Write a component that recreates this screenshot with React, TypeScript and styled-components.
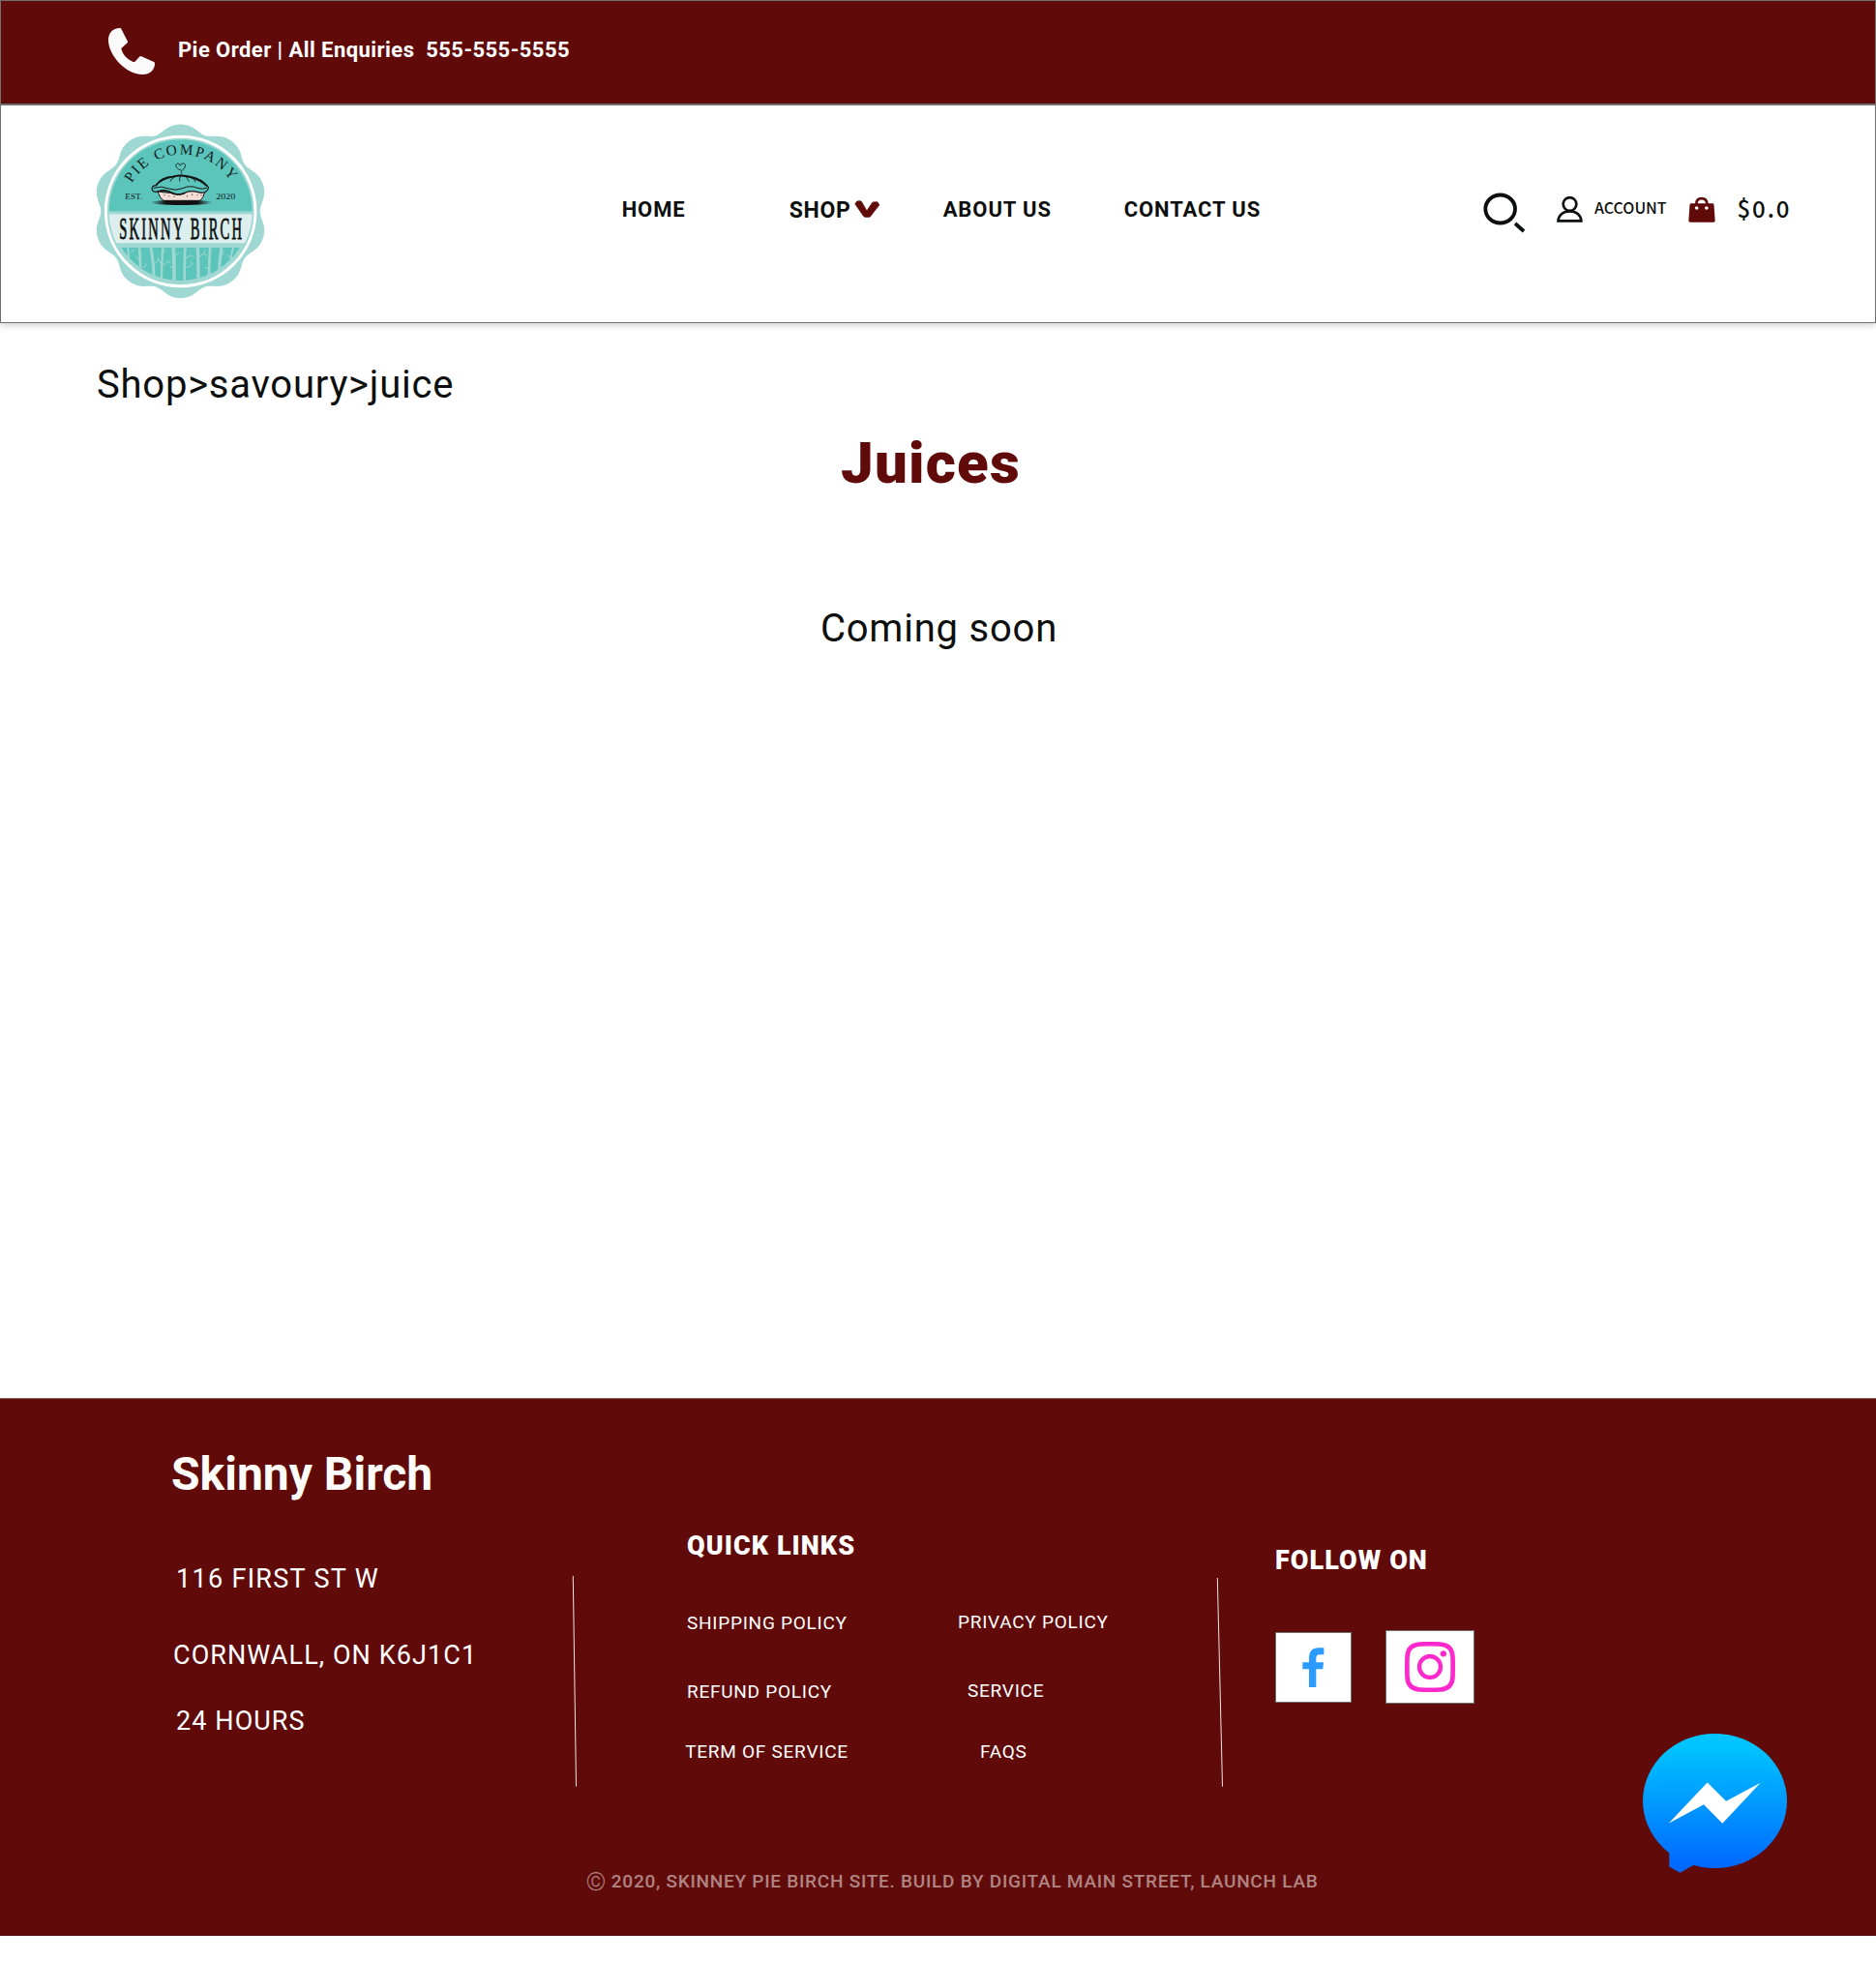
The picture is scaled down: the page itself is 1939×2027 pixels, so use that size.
import React from "react";
import styled, { createGlobalStyle } from "styled-components";

const maroon = "#600b0a";
const ink = "#0d0f0e";
const outline = "#707070";

const GlobalStyle = createGlobalStyle`
  *, *::before, *::after { box-sizing: border-box; }
  body {
    margin: 0;
    background: #fff;
    font-family: Roboto, "Noto Sans", sans-serif;
    color: ${ink};
  }
  h1, h2, h3, p, ul { margin: 0; padding: 0; }
  ul { list-style: none; }
  a { color: inherit; text-decoration: none; }
  svg { display: block; flex: none; }
`;

const Page = styled.div`
  display: flex;
  flex-direction: column;
  width: 1939px;
  min-height: 2027px;
`;

const TopBar = styled.div`
  display: flex;
  align-items: flex-start;
  gap: 24px;
  height: 108px;
  padding: 28px 0 0 111px;
  border: 1px solid ${outline};
  background: ${maroon};
`;

const TopBarText = styled.p`
  margin-top: 10px;
  font-size: 22px;
  font-weight: 700;
  line-height: 26px;
  letter-spacing: 0.44px;
  white-space: pre;
  color: #fff;
`;

const Header = styled.header`
  display: grid;
  grid-template-columns: 542.7px 173px 159px 187px 371.8px 76px 135.5px auto;
  align-items: start;
  height: 226px;
  padding: 0 0 0 99px;
  border: 1px solid ${outline};
  background: #fff;
  box-shadow: 0 3px 6px rgba(0, 0, 0, 0.16);
  z-index: 1;
`;

const LogoLink = styled.a`
  margin-top: 19px;
`;

const NavLink = styled.a<{ $drop?: number; $size?: number; $ls?: number }>`
  display: flex;
  gap: 3px;
  margin-top: ${({ $drop = 0 }) => 94.5 + $drop}px;
  font-size: ${({ $size = 22 }) => $size}px;
  font-weight: 700;
  line-height: 26px;
  letter-spacing: ${({ $ls = 0.9 }) => $ls}px;
`;

const IconSlot = styled.span<{ $top: number }>`
  display: flex;
  margin-top: ${({ $top }) => $top}px;
`;

const HeaderAction = styled.a`
  display: flex;
  gap: 12px;
  margin-top: 94px;
  font-family: "Noto Sans CJK JP", "Noto Sans", sans-serif;
  font-weight: 500;
`;

const AccountLabel = styled.span`
  margin: -1px 0 0 -0.5px;
  font-size: 16px;
  line-height: 24px;
`;

const CartTotal = styled.span`
  margin: -6px 0 0 10.5px;
  font-size: 24px;
  line-height: 36px;
  letter-spacing: 1.93px;
`;

const Main = styled.main`
  display: flex;
  flex-direction: column;
  height: 1111px;
  padding-top: 40px;
`;

const Breadcrumb = styled.nav`
  padding-left: 100px;
  font-size: 40px;
  line-height: 48px;
  letter-spacing: 0.77px;
`;

const Title = styled.h1`
  margin-top: 21.5px;
  padding-right: 15px;
  font-size: 60px;
  font-weight: 900;
  line-height: 70px;
  letter-spacing: 1.2px;
  text-align: center;
  color: ${maroon};
`;

const Notice = styled.p`
  margin-top: 112.5px;
  padding-left: 2px;
  font-size: 40px;
  line-height: 48px;
  letter-spacing: 0.78px;
  text-align: center;
`;

const Footer = styled.footer`
  position: relative;
  height: 556px;
  border-top: 1px solid #8a6262;
  background: ${maroon};
  color: #fff;
`;

const FooterColumns = styled.div`
  display: flex;
  align-items: flex-start;
  height: 487.5px;
`;

const ContactColumn = styled.section`
  width: 591px;
  padding: 50px 0 0 177px;
`;

const Brand = styled.h2`
  font-size: 48px;
  font-weight: 700;
  line-height: 56px;
  color: #fdfcf8;
`;

const AddressLine = styled.p<{ $top: number; $left: number; $ls: number }>`
  margin: ${({ $top }) => $top}px 0 0 ${({ $left }) => $left}px;
  font-size: 27px;
  line-height: 32px;
  letter-spacing: ${({ $ls }) => $ls}px;
`;

const Divider = styled.svg<{ $top: number }>`
  margin-top: ${({ $top }) => $top}px;
`;

const LinksColumn = styled.section`
  width: 660px;
  padding: 136px 0 0 113px;
`;

const FollowColumn = styled.section`
  padding: 151px 0 0 53px;
`;

const FooterHeading = styled.h3`
  font-size: 27px;
  font-weight: 900;
  line-height: 32px;
  letter-spacing: 1.07px;
`;

const LinkLists = styled.div`
  display: grid;
  grid-template-columns: 280px auto;
`;

const FooterLink = styled.li<{ $top: number; $left?: number }>`
  margin: ${({ $top }) => $top}px 0 0 ${({ $left = 0 }) => $left}px;
  font-size: 19px;
  line-height: 22px;
  letter-spacing: 0.74px;
`;

const SocialRow = styled.div`
  display: flex;
  align-items: center;
  gap: 35px;
  margin-top: 56px;
`;

const SocialTile = styled.a<{ $w: number; $h: number }>`
  display: flex;
  align-items: center;
  justify-content: center;
  width: ${({ $w }) => $w}px;
  height: ${({ $h }) => $h}px;
  border: 1px solid ${outline};
  background: #fff;
`;

const Copyright = styled.p`
  display: flex;
  gap: 5.5px;
  padding-left: 605.5px;
  font-size: 19px;
  font-weight: 500;
  line-height: 22px;
  letter-spacing: 0.745px;
  color: #b08483;
`;

const CopyrightMark = styled.span`
  font-size: 26px;
  font-weight: 300;
  letter-spacing: 0;
`;

const ChatButton = styled.a`
  position: absolute;
  top: 346px;
  right: 92px;
`;

const PhoneIcon = () => (
  <svg width="48" height="48" viewBox="0 0 48 48" fill="#fafafa">
    <path d="M12 0C12.7 0 13.1.3 13.4 1L19.8 13.6c.4.8.2 1.4-.4 2L13.3 21C14.5 27.5 20.6 33.9 27 35.2L32.3 29.6c.6-.6 1.2-.7 1.9-.3L47 35c.7.3 1 .8 1 1.5C48 43.500 42.500 48 35.500 48C17 48 0 27 0 12.500C0 5 4.500 0 12 0Z" />
  </svg>
);

const ChevronSvg = styled.svg`
  margin-top: 2.500px;
`;

const ChevronIcon = () => (
  <ChevronSvg width="27" height="20" viewBox="0 0 27 20">
    <path
      d="M2.800 1L6 0.800Q7 0.800 7.600 1.800L12.900 11L18.400 2.800Q19 1.900 20 1.900L23.800 1.800L25.800 4.800L16.800 16.400Q16.100 17.300 15.100 17.300H11.300Q10.300 17.300 9.600 16.400L0.800 3.800Z"
      fill={maroon} stroke={maroon} strokeWidth="0.8" strokeLinejoin="round"
    />
  </ChevronSvg>
);

const SearchIcon = () => (
  <svg width="44" height="42" viewBox="99 55 132 126" fill="none" stroke={ink}>
    <ellipse cx="152" cy="106" rx="46" ry="43.500" strokeWidth="11.500" />
    <path d="M198 151L225 175" strokeWidth="11.500" />
  </svg>
);

const UserIcon = () => (
  <svg width="27" height="27" viewBox="327 70 81 81" fill="none" stroke={ink} strokeWidth="8">
    <circle cx="367.500" cy="94" r="20.500" />
    <path d="M331.500 146H403C402 127 387 116 367.500 116S332.500 127 331.500 146Z" />
  </svg>
);

const BagIcon = () => (
  <svg width="28" height="28" viewBox="736 68 84 84">
    <path d="M761 92C761 80 767 74.500 777 74.500S794 80 794 92" fill="none" stroke={maroon} strokeWidth="8" />
    <path d="M744 90H811Q815 90 815.500 94L819 143Q819 148 814 148H742Q737 148 737 143L740.500 94Q741 90 744 90Z" fill={maroon} />
    <circle cx="762" cy="104" r="5.500" fill="#fff" />
    <circle cx="792.500" cy="104" r="5.500" fill="#fff" />
  </svg>
);

const FacebookIcon = () => (
  <svg width="23" height="41" viewBox="317 371 69 123">
    <path d="M338 495V438H318V417H338V405C338 383 348 372 367 372H384V393H371C363 393 360 396 360 404V417H383L381 438H360V495Z" fill="#2b9bff" />
  </svg>
);

const InstagramIcon = () => (
  <svg width="52" height="52" viewBox="636 351 156 156" fill="none" stroke="#fd29cd" strokeWidth="14">
    <path d="M683 358.500Q714 357 745 358.500Q783 361 784.500 398Q785.500 429 784.500 460Q783 497 745 499.500Q714 501 683 499.500Q645 497 643.500 460Q642.500 429 643.500 398Q645 361 683 358.500Z" />
    <circle cx="714" cy="429" r="33" strokeWidth="13" />
    <circle cx="755.500" cy="388" r="9.500" fill="#fd29cd" stroke="none" />
  </svg>
);

const MessengerIcon = () => (
  <svg width="149" height="144" viewBox="114 65.500 447 432">
    <defs>
      <linearGradient id="chatFill" gradientUnits="userSpaceOnUse" x1="0" y1="66" x2="0" y2="482">
        <stop offset="0" stopColor="#00c6ff" />
        <stop offset="0.1" stopColor="#00c3ff" />
        <stop offset="1" stopColor="#0068ff" />
      </linearGradient>
    </defs>
    <ellipse cx="337.500" cy="274" rx="223.500" ry="208.500" fill="url(#chatFill)" />
    <path d="M196 400V478L229 497L272 473L300 440Z" fill="url(#chatFill)" />
    <path d="M194 344L314 217L372 275L479 218L361 344L303 285Z" fill="#fff" />
  </svg>
);

const badgeCenter = { x: 319.5, y: 324 };

const scallopPath = (() => {
  const points: string[] = [];
  for (let deg = 0; deg < 360; deg += 2) {
    const a = (deg * Math.PI) / 180;
    const r = 259.5 + 11.5 * Math.cos(10 * a) - 1.5 * Math.cos(20 * a);
    points.push(`${(badgeCenter.x + r * Math.sin(a)).toFixed(1)} ${(badgeCenter.y - r * Math.cos(a)).toFixed(1)}`);
  }
  return `M${points.join("L")}Z`;
})();

const birchTrunks = [
  [156, 6, 6], [192, 8, 4], [227, 9, 10], [265, 7, -4], [298, 11, 2], [334, 8, -2],
  [373, 10, 2], [412, 8, -4], [447, 9, -8], [484, 6, -14],
];

const Logo = () => (
  <svg width="174" height="181" viewBox="60 53 522 543" role="img" aria-label="Skinny Birch Pie Company">
    <defs>
      <clipPath id="badgeDisc"><circle cx="320" cy="324" r="222" /></clipPath>
      <clipPath id="groveDisc"><circle cx="320" cy="324" r="215" /></clipPath>
      <path id="nameArc" d="M168 238A180 180 0 0 1 480 238" />
      <linearGradient id="panShadow">
        <stop offset="0" stopColor="#111" stopOpacity="0" />
        <stop offset="0.25" stopColor="#111" />
        <stop offset="0.75" stopColor="#111" />
        <stop offset="1" stopColor="#111" stopOpacity="0" />
      </linearGradient>
    </defs>
    <path d={scallopPath} fill="#9fd8d2" />
    <circle cx="320" cy="324.500" r="232" fill="none" stroke="#fff" strokeWidth="9" />
    <g clipPath="url(#badgeDisc)">
      <rect x="90" y="102" width="460" height="222" fill="#5bc4bb" />
      <rect x="90" y="333" width="460" height="90" fill="#dceeed" />
    </g>
    <g clipPath="url(#groveDisc)">
      <rect x="90" y="437" width="460" height="110" fill="#5bc4bb" />
      <g fill="none" stroke="#9fd8d2">
        {birchTrunks.map(([x, w, lean]) => (
          <path key={x} d={`M${x} 434Q${x + lean} 480 ${x + lean} 545`} strokeWidth={w} />
        ))}
        <path
          strokeWidth="3"
          d="M165 452L178 442M195 478L180 462M232 492L252 476L258 486M252 476L250 466M262 455L274 445M266 492L284 478L290 486M301 462L316 452M301 505L288 496M334 470L352 460L362 466M338 500L356 490L352 480M372 470L390 456L396 444M390 456L402 462M412 505L396 498M441 470L452 458L450 446M447 500L462 488L470 492M475 470L464 458M205 500L216 486"
        />
      </g>
    </g>
    <text fontFamily="'Liberation Serif', serif" fontSize="46" fill="#14211f">
      <textPath href="#nameArc" startOffset="1" textLength="366" lengthAdjust="spacing">PIE COMPANY</textPath>
    </text>
    <text x="148" y="287" fontFamily="'Liberation Serif', serif" fontSize="25" fill="#14211f" textLength="54" lengthAdjust="spacingAndGlyphs">EST.</text>
    <text x="430" y="287" fontFamily="'Liberation Serif', serif" fontSize="25" fill="#14211f" textLength="60" lengthAdjust="spacingAndGlyphs">2020</text>
    <ellipse cx="323" cy="297" rx="97" ry="8" fill="url(#panShadow)" />
    <path d="M248 261Q256 285 267 291H381Q390 284 396 262Q350 250 322 262Q280 272 248 261Z" fill="#f5ddd8" stroke="#151515" strokeWidth="3" />
    <path
      d="M232 258Q228 246 243 244Q258 218 298 216Q322 208 352 217Q385 224 404 246Q410 252 400 262Q392 270 374 265Q350 258 330 268Q310 276 292 266Q272 256 252 262Q236 268 232 258Z"
      fill="#5bc4bb" stroke="#151515" strokeWidth="3.500"
    />
    <path d="M236 252Q258 244 284 254Q304 262 326 253Q350 242 372 252Q388 258 402 251" fill="none" stroke="#151515" strokeWidth="3" />
    <path d="M244 243Q262 222 296 217Q322 210 352 219Q382 226 400 245M250 263Q274 256 294 268Q312 276 332 268" fill="none" stroke="#151515" strokeWidth="5" strokeLinecap="round" />
    <path d="M304 217Q290 222 288 232M320 214Q314 224 318 232M334 216Q342 222 346 232M356 221Q364 226 366 234" fill="none" stroke="#151515" strokeWidth="2.500" />
    <path d="M270 272V276M284 275V279M300 277V281M340 275V279M356 270V275M372 272V276M384 272V276" stroke="#151515" strokeWidth="2" />
    <path d="M323 207Q318 201 327 195Q336 188 335 181Q332 173 324 176Q320 178 319 183Q317 174 309 176Q302 180 307 188Q311 194 321 197" fill="none" stroke="#14211f" strokeWidth="2.500" strokeLinecap="round" />
    <g transform="translate(130 411) scale(0.46 1)">
      <text fontFamily="'Liberation Serif', serif" fontSize="95" fill="#0c0f0f" stroke="#0c0f0f" strokeWidth="2.500" textLength="826" lengthAdjust="spacing">SKINNY BIRCH</text>
    </g>
  </svg>
);

const primaryLinks = [
  { label: "SHIPPING POLICY", top: 52.5, left: 0 },
  { label: "REFUND POLICY", top: 49, left: 0 },
  { label: "TERM OF SERVICE", top: 40, left: -1.8 },
];

const secondaryLinks = [
  { label: "PRIVACY POLICY", top: 51.5, left: 0 },
  { label: "SERVICE", top: 49, left: 10 },
  { label: "FAQS", top: 41, left: 23 },
];

export default function App() {
  return (
    <>
      <GlobalStyle />
      <Page>
        <TopBar>
          <PhoneIcon />
          <TopBarText>{"Pie Order | All Enquiries  555-555-5555"}</TopBarText>
        </TopBar>

        <Header>
          <LogoLink href="#"><Logo /></LogoLink>
          <NavLink href="#">HOME</NavLink>
          <NavLink href="#" $drop={1} $size={23} $ls={0.7}>SHOP<ChevronIcon /></NavLink>
          <NavLink href="#">ABOUT US</NavLink>
          <NavLink href="#">CONTACT US</NavLink>
          <IconSlot $top={89.5}><SearchIcon /></IconSlot>
          <HeaderAction href="#">
            <UserIcon />
            <AccountLabel>ACCOUNT</AccountLabel>
          </HeaderAction>
          <HeaderAction href="#">
            <BagIcon />
            <CartTotal>$0.0</CartTotal>
          </HeaderAction>
        </Header>

        <Main>
          <Breadcrumb>Shop&gt;savoury&gt;juice</Breadcrumb>
          <Title>Juices</Title>
          <Notice>Coming soon</Notice>
        </Main>

        <Footer>
          <FooterColumns>
            <ContactColumn>
              <Brand>Skinny Birch</Brand>
              <AddressLine $top={64} $left={5} $ls={1.3}>116 FIRST ST W</AddressLine>
              <AddressLine $top={47} $left={2} $ls={1.08}>CORNWALL, ON K6J1C1</AddressLine>
              <AddressLine $top={36} $left={5} $ls={1.08}>24 HOURS</AddressLine>
            </ContactColumn>
            <Divider $top={183} width="6" height="218" viewBox="0 0 6 218">
              <path d="M1.300 0L4.500 217.500" stroke="#fff" strokeWidth="0.9" />
            </Divider>
            <LinksColumn>
              <FooterHeading>QUICK LINKS</FooterHeading>
              <LinkLists>
                <ul>
                  {primaryLinks.map((l) => (
                    <FooterLink key={l.label} $top={l.top} $left={l.left}><a href="#">{l.label}</a></FooterLink>
                  ))}
                </ul>
                <ul>
                  {secondaryLinks.map((l) => (
                    <FooterLink key={l.label} $top={l.top} $left={l.left}><a href="#">{l.label}</a></FooterLink>
                  ))}
                </ul>
              </LinkLists>
            </LinksColumn>
            <Divider $top={185} width="8" height="216" viewBox="0 0 8 216">
              <path d="M1.300 0L6.500 215.700" stroke="#fff" strokeWidth="0.9" />
            </Divider>
            <FollowColumn>
              <FooterHeading>FOLLOW ON</FooterHeading>
              <SocialRow>
                <SocialTile href="#" $w={79} $h={73}><FacebookIcon /></SocialTile>
                <SocialTile href="#" $w={92} $h={76}><InstagramIcon /></SocialTile>
              </SocialRow>
            </FollowColumn>
          </FooterColumns>
          <Copyright>
            <CopyrightMark>©</CopyrightMark>
            2020, SKINNEY PIE BIRCH SITE. BUILD BY DIGITAL MAIN STREET, LAUNCH LAB
          </Copyright>
          <ChatButton href="#"><MessengerIcon /></ChatButton>
        </Footer>
      </Page>
    </>
  );
}
